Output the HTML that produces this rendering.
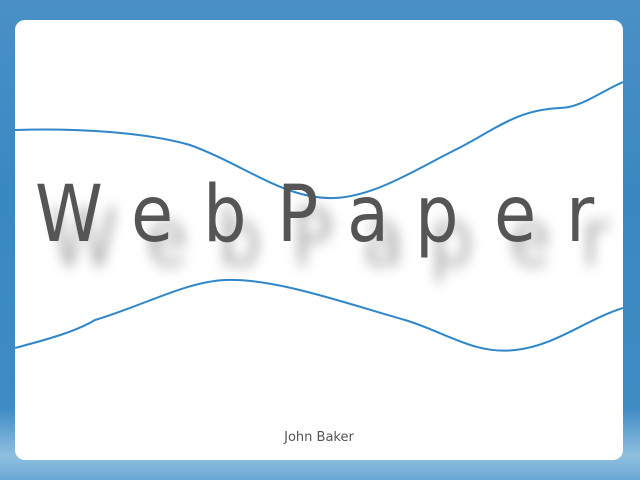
<!DOCTYPE html>
<html><head><meta charset="utf-8"><style>
html,body{margin:0;padding:0;width:640px;height:480px;overflow:hidden}
body{background:linear-gradient(180deg,#4a90c6 0%,#3a88c2 40%,#3f8bc4 85%,#8fbfe0 95%,#6aa8d6 100%);position:relative;font-family:"DejaVu Sans","Liberation Sans",sans-serif}
.card{position:absolute;left:15px;top:20px;width:608px;height:440px;background:#fff;border-radius:10px;overflow:hidden}
.t,.s{position:absolute;font-size:78px;line-height:1;transform:scaleX(0.88);transform-origin:0 0}
.t{top:156px;color:#555}
.s{top:180px;color:rgba(0,0,0,0.33);filter:blur(7px)}
.a{position:absolute;left:0;width:608px;top:410px;text-align:center;font-size:13px;color:#555}
</style></head><body>
<div class="card">
<svg width="608" height="440" style="position:absolute;left:0;top:0">
<path d="M0 110 C60 108 130 112 175 125 C230 145 270 180 320 178 C360 176 400 150 440 130 C480 110 500 90 545 88 C565 88 585 72 608 62" fill="none" stroke="#2f86c8" stroke-width="2"/>
<path d="M0 328 C30 320 60 312 80 300 C130 285 170 262 210 260 C260 258 330 283 390 300 C430 312 460 335 500 330 C540 326 570 300 608 288" fill="none" stroke="#2f86c8" stroke-width="2"/>
</svg>
<div class="s" style="left:35px">W</div><div class="s" style="left:131px">e</div><div class="s" style="left:203px">b</div><div class="s" style="left:277px">P</div><div class="s" style="left:347px">a</div><div class="s" style="left:415px">p</div><div class="s" style="left:494px">e</div><div class="s" style="left:566px">r</div>
<div class="t" style="left:20px">W</div><div class="t" style="left:116px">e</div><div class="t" style="left:188px">b</div><div class="t" style="left:262px">P</div><div class="t" style="left:332px">a</div><div class="t" style="left:400px">p</div><div class="t" style="left:479px">e</div><div class="t" style="left:551px">r</div>
<div class="a">John Baker</div>
</div>
</body></html>
